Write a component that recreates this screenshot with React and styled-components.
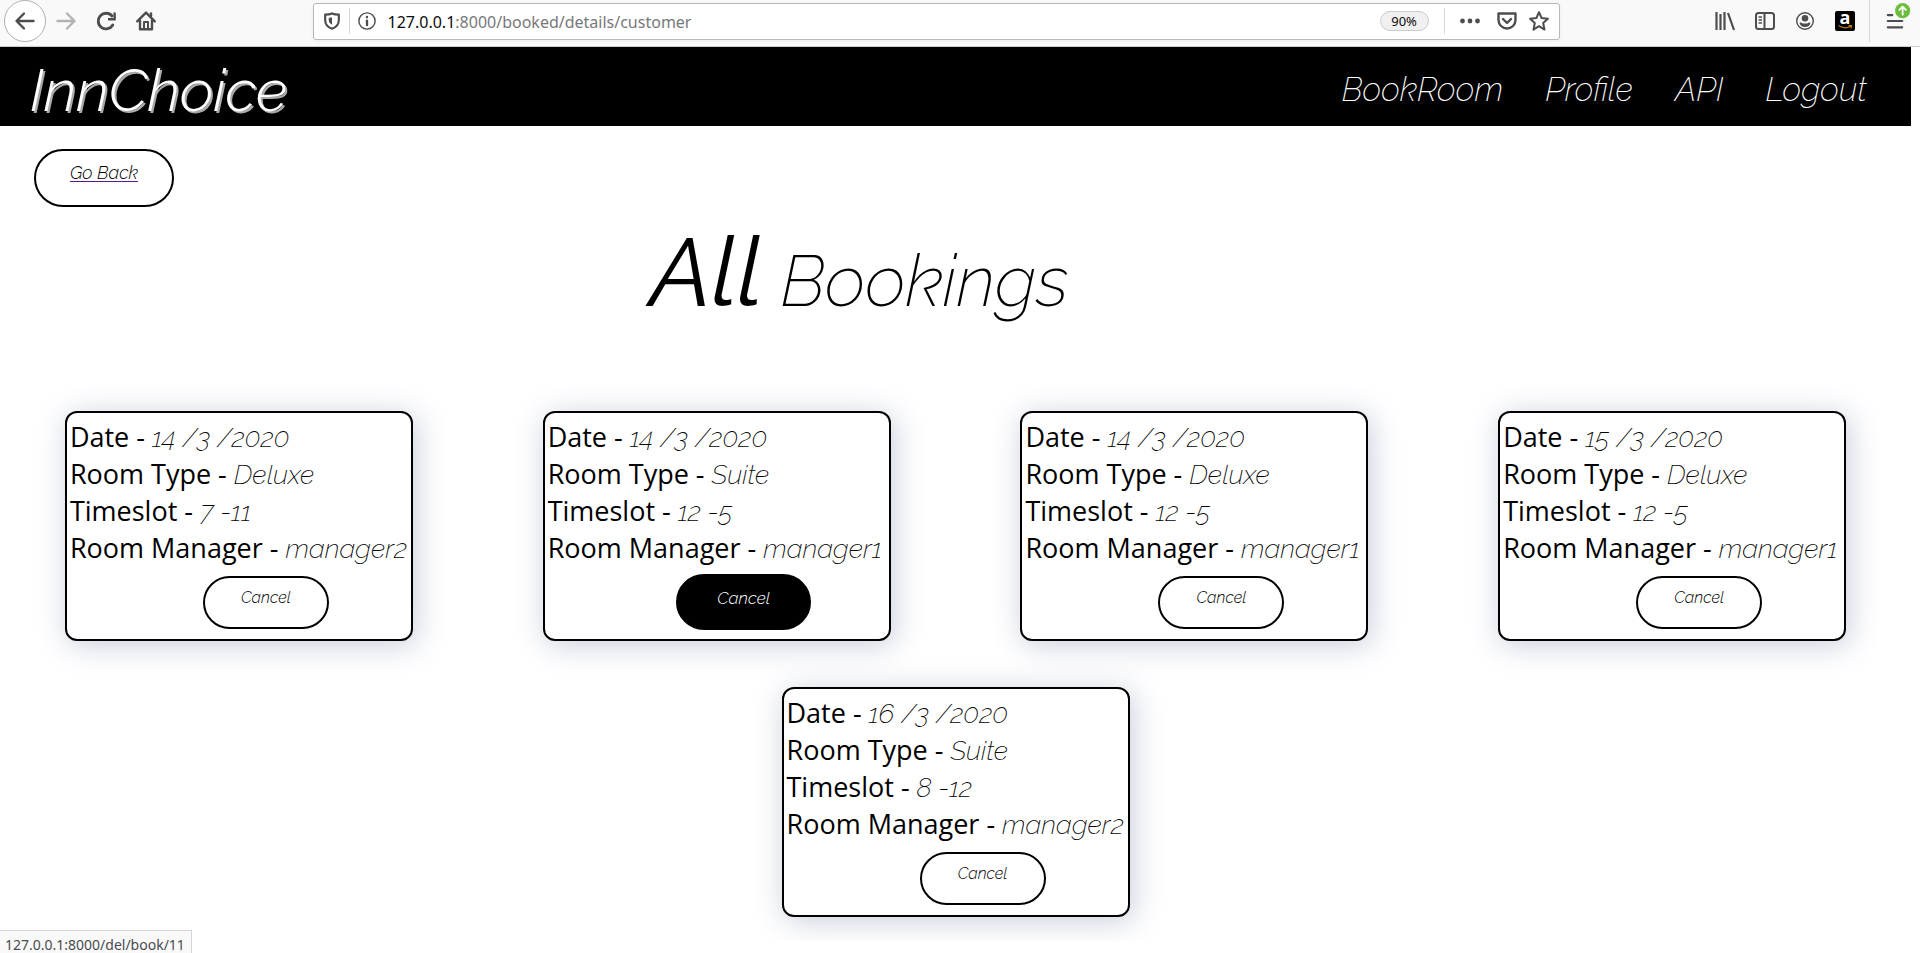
import React from "react";
import styled, { createGlobalStyle, css } from "styled-components";

const script = `"Raleway", "Lato", "Open Sans", sans-serif`;
const ui = `"Segoe UI", "Noto Sans", sans-serif`;

const GlobalStyle = createGlobalStyle`
  *, *::before, *::after { box-sizing: border-box; }
  body { margin: 0; background: #fff; color: #000; font-family: "Open Sans", sans-serif; }
  button, input { font: inherit; color: inherit; }
`;

/* Browser chrome */
const Toolbar = styled.header`
  display: flex;
  align-items: center;
  height: 47px;
  padding: 0 0 4px 4px;
  background: #f9f9fa;
  border-bottom: 1px solid #ccc;
  font-family: ${ui};
`;

const ToolGroup = styled.div`
  display: flex;
  flex: ${(p) => p.$grow} 1 0;
  align-items: center;
  justify-content: ${(p) => (p.$end ? "flex-end" : "flex-start")};
`;

const IconButton = styled.button`
  display: grid;
  place-items: center;
  flex: none;
  width: ${(p) => p.$w || 40}px;
  height: 32px;
  padding: 0;
  border: 0;
  background: none;
  color: #4d4d4f;
  opacity: ${(p) => (p.disabled ? 0.4 : 1)};
  svg { display: block; overflow: visible; }
`;

const BackButton = styled(IconButton)`
  width: 42px;
  height: 42px;
  border: 1px solid #b1b1b3;
  border-radius: 50%;
  background: #fff;
`;

const AddressBar = styled.div`
  display: flex;
  align-items: center;
  flex: 1246 1 0;
  height: 37px;
  padding: 0 0 0 1px;
  border: 1px solid #b8b8b9;
  border-radius: 3px;
  background: #fff;
  box-shadow: 0 1px 4px rgba(0, 0, 0, 0.06);
`;

const Url = styled.div`
  flex: 1;
  padding: 2px 0 0 3px;
  font-size: 16px;
  line-height: 24px;
  color: #78787a;
  b { font-weight: 400; color: #0c0c0d; }
`;

const ZoomPill = styled.button`
  height: 20px;
  width: 49px;
  margin-right: 15px;
  padding: 0;
  border: 1px solid #ccc;
  border-radius: 10px;
  background: #f0f0f1;
  font-size: 13px;
  line-height: 18px;
  color: #0c0c0d;
`;

const Rule = styled.span`
  flex: none;
  width: 1px;
  height: ${(p) => p.$h || 26}px;
  margin-left: ${(p) => p.$gap || 0}px;
  background: #d7d7db;
`;

/* Site */
const Site = styled.div`
  padding-right: 9px;
`;

const NavBar = styled.nav`
  display: flex;
  align-items: center;
  justify-content: space-between;
  height: 79px;
  padding: 0 44px 0 30px;
  background: #000;
  color: #fff;
  font-family: ${script};
  font-style: italic;
`;

const Brand = styled.a`
  padding-top: 8px;
  color: #fff;
  font-size: 59px;
  line-height: 70px;
  font-weight: 300;
  text-decoration: none;
  text-shadow: 2px 2px 0 #a9a9a9;
`;

const NavLinks = styled.div`
  display: flex;
  gap: 42px;
  padding-top: 6px;
`;

const NavLink = styled.a`
  color: #fff;
  font-size: 33px;
  line-height: 40px;
  font-weight: 200;
  text-decoration: none;
`;

const pill = css`
  display: inline-block;
  border: 2px solid #000;
  border-radius: 30px;
  background: #fff;
  color: #000;
  font-family: ${script};
  font-style: italic;
  font-weight: 300;
`;

const BackLink = styled.a`
  ${pill}
  width: 140px;
  height: 58px;
  margin: 23px 0 0 34px;
  padding-top: 10px;
  font-size: 18px;
  line-height: 24px;
  text-align: center;
  text-decoration: underline #551a8b 1px;
  text-underline-offset: 2px;
`;

const Title = styled.h1`
  margin: 9px 0 0 34%;
  height: 195px;
  font-family: ${script};
  font-style: italic;
  font-weight: 200;
  font-size: 71px;
  line-height: 112px;
  white-space: nowrap;
  strong { font-size: 96px; font-weight: 400; }
`;

const Bookings = styled.ul`
  display: flex;
  flex-wrap: wrap;
  justify-content: space-around;
  row-gap: 46px;
  margin: 0;
  padding: 0 0 24px;
  list-style: none;
`;

const Card = styled.li`
  width: 348px;
  height: 230px;
  margin: 0 23px;
  padding: 5px 0 0 3px;
  border: 2px solid #000;
  border-radius: 12px;
  background: #fff;
  box-shadow: 3px 4px 30px rgba(30, 55, 110, 0.25);
`;

const Field = styled.p`
  margin: 0;
  font-size: 27px;
  line-height: 37px;
  white-space: nowrap;
  em {
    font-family: ${script};
    font-weight: 200;
    line-height: 1;
  }
`;

const CardAction = styled.div`
  display: flex;
  align-items: center;
  justify-content: center;
  width: 126px;
  height: 54px;
  margin: 9px 0 0 133px;
`;

const CancelButton = styled.button`
  ${pill}
  flex: none;
  width: ${(p) => (p.$active ? 135 : 126)}px;
  height: ${(p) => (p.$active ? 56 : 53)}px;
  padding: 0 0 9px;
  font-size: ${(p) => (p.$active ? 17 : 16)}px;
  ${(p) => p.$active && css`background: #000; color: #fff;`}
`;

const StatusBar = styled.div`
  position: fixed;
  left: 0;
  bottom: 0;
  height: 23px;
  padding: 0 6px 0 5px;
  border: 1px solid #d5d5d5;
  border-width: 1px 1px 0 0;
  background: #f9f9fa;
  font-family: ${ui};
  font-size: 14px;
  line-height: 28px;
  overflow: hidden;
  color: #4a4a4f;
`;

const Icon = ({ size = 20, children, ...rest }) => (
  <svg width={size} height={size} viewBox="0 0 20 20" fill="none" stroke="currentColor"
    strokeWidth="2.4" strokeLinecap="round" strokeLinejoin="round" aria-hidden="true" {...rest}>
    {children}
  </svg>
);

const bookings = [
  { id: 10, date: "14 /3 /2020", room: "Deluxe", slot: "7 -11", manager: "manager2" },
  { id: 11, date: "14 /3 /2020", room: "Suite", slot: "12 -5", manager: "manager1" },
  { id: 12, date: "14 /3 /2020", room: "Deluxe", slot: "12 -5", manager: "manager1" },
  { id: 13, date: "15 /3 /2020", room: "Deluxe", slot: "12 -5", manager: "manager1" },
  { id: 14, date: "16 /3 /2020", room: "Suite", slot: "8 -12", manager: "manager2" },
];

const activeId = 11;

function BrowserToolbar() {
  return (
    <Toolbar>
      <ToolGroup $grow={309}>
        <BackButton aria-label="Back">
          <Icon><path d="M18.5 10H1.8M9 2.5L1.5 10L9 17.5" /></Icon>
        </BackButton>
        <IconButton aria-label="Forward" disabled>
          <Icon><path d="M1.5 10H18.2M11 2.5L18.5 10L11 17.5" /></Icon>
        </IconButton>
        <IconButton aria-label="Reload">
          <Icon strokeWidth="2.8">
            <path d="M16.8 14A7.8 7.8 0 1 1 16 5" />
            <path d="M18.6 1.5V8.2H12" strokeWidth="2.4" strokeLinecap="butt" strokeLinejoin="miter" />
          </Icon>
        </IconButton>
        <IconButton aria-label="Home">
          <Icon>
            <path d="M1.2 10.3L10 1.6L18.8 10.3M4 9.5V18.3H16V9.5" />
            <path d="M8 18V11H12V18" strokeWidth="2" />
            <path d="M15 2.5V5" />
          </Icon>
        </IconButton>
      </ToolGroup>

      <AddressBar>
        <IconButton aria-label="Tracking protection" $w={34}>
          <Icon size={18}>
            <path d="M10 1.6C12.5 2.8 15 3 17.6 3V9C17.6 13.8 14.8 17 10 18.6C5.2 17 2.4 13.8 2.4 9V3C5 3 7.5 2.8 10 1.6Z" />
            <path d="M10 6V14.3C7.6 13 6.4 11.2 6.4 9V6.3Z" fill="currentColor" stroke="none" />
          </Icon>
        </IconButton>
        <Rule />
        <IconButton aria-label="Site information" $w={35}>
          <Icon size={18} strokeWidth="1.6">
            <circle cx="10" cy="10" r="9" />
            <path d="M10 9.5V14.5M10 5.5V5.7" strokeWidth="2.6" />
          </Icon>
        </IconButton>
        <Url><b>127.0.0.1</b>:8000/booked/details/customer</Url>
        <ZoomPill>90%</ZoomPill>
        <Rule />
        <IconButton aria-label="Page actions" $w={50}>
          <Icon fill="currentColor" stroke="none">
            <circle cx="2.5" cy="10" r="2.4" />
            <circle cx="10" cy="10" r="2.4" />
            <circle cx="17.5" cy="10" r="2.4" />
          </Icon>
        </IconButton>
        <IconButton aria-label="Save to Pocket" $w={24}>
          <Icon>
            <path d="M1.5 2.5H18.5V9A8.5 8.5 0 0 1 1.5 9Z" />
            <path d="M6 8L10 12L14 8" />
          </Icon>
        </IconButton>
        <IconButton aria-label="Bookmark" $w={40}>
          <Icon strokeWidth="2">
            <path d="M10 1.2L12.6 7L18.9 7.7L14.2 12L15.5 18.6L10 15.2L4.5 18.6L5.8 12L1.1 7.7L7.4 7Z" />
          </Icon>
        </IconButton>
      </AddressBar>

      <ToolGroup $grow={361} $end>
        <IconButton aria-label="Library">
          <Icon strokeWidth="2.2" strokeLinecap="butt"><path d="M1.5 1V19M5.5 3V19M9.5 1V19M13 2L19 19" /></Icon>
        </IconButton>
        <IconButton aria-label="Sidebars">
          <Icon strokeWidth="2">
            <rect x="1" y="2" width="18" height="16" rx="2.5" />
            <path d="M9.5 2V18" />
            <path d="M4 6H6.5M4 9H6.5M4 12H6.5" strokeWidth="1.3" />
          </Icon>
        </IconButton>
        <IconButton aria-label="Account">
          <Icon strokeWidth="1.4">
            <circle cx="10" cy="10" r="8.3" />
            <circle cx="10" cy="7.2" r="3.3" fill="currentColor" stroke="none" />
            <path d="M4.5 11.5C6 11.5 7 12 7.7 12.4H12.3C13 12 14 11.5 15.5 11.5C15 14.5 13 16 10 16S5 14.5 4.5 11.5Z" fill="currentColor" stroke="none" />
          </Icon>
        </IconButton>
        <IconButton aria-label="Amazon">
          <Icon stroke="none">
            <rect width="20" height="20" rx="2" fill="#000" />
            <text x="10" y="13" textAnchor="middle" fill="#fff" fontSize="18" fontWeight="700" fontFamily="Open Sans, sans-serif">a</text>
            <path d="M4 14.8Q10 18.5 15 15.5M14 14.6H16.5L16 16.8" stroke="#c77c11" strokeWidth="1.2" />
          </Icon>
        </IconButton>
        <Rule $h={42} $gap={4} />
        <IconButton aria-label="Menu, update available" $w={50}>
          <Icon size={18}>
            <path d="M2 3.4H7M2 10H18M2 17H18" />
            <circle cx="18.5" cy="-1.5" r="8.4" fill="#6cbe3c" stroke="none" />
            <path d="M18.5 3V-5.5M15 -2.5L18.5 -6L22 -2.5" stroke="#fff" strokeWidth="2" />
          </Icon>
        </IconButton>
      </ToolGroup>
    </Toolbar>
  );
}

function BookingCard({ booking }) {
  return (
    <Card>
      <Field>Date - <em>{booking.date}</em></Field>
      <Field>Room Type - <em>{booking.room}</em></Field>
      <Field>Timeslot - <em>{booking.slot}</em></Field>
      <Field>Room Manager - <em>{booking.manager}</em></Field>
      <CardAction>
        <CancelButton $active={booking.id === activeId}>Cancel</CancelButton>
      </CardAction>
    </Card>
  );
}

export default function App() {
  return (
    <>
      <GlobalStyle />
      <BrowserToolbar />
      <Site>
        <NavBar>
          <Brand href="#home">InnChoice</Brand>
          <NavLinks>
            <NavLink href="#book">BookRoom</NavLink>
            <NavLink href="#profile">Profile</NavLink>
            <NavLink href="#api">API</NavLink>
            <NavLink href="#logout">Logout</NavLink>
          </NavLinks>
        </NavBar>
        <main>
          <BackLink href="#back">Go Back</BackLink>
          <Title><strong>All</strong> Bookings</Title>
          <Bookings>
            {bookings.map((b) => <BookingCard key={b.id} booking={b} />)}
          </Bookings>
        </main>
      </Site>
      <StatusBar>127.0.0.1:8000/del/book/11</StatusBar>
    </>
  );
}
